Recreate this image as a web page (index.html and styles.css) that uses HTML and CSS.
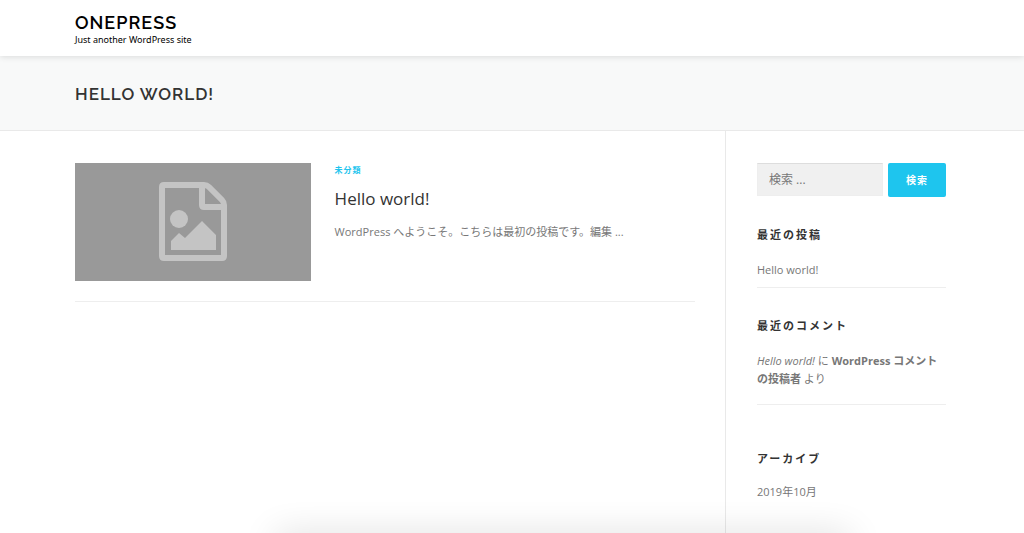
FILE: index.html
```html
<!DOCTYPE html>
<html lang="ja">
<head>
  <meta charset="UTF-8">
  <meta name="viewport" content="width=device-width, initial-scale=1">
  <title>Hello world! - OnePress</title>
  <link rel="stylesheet" href="styles.css">
</head>
<body>
  <header class="site-header">
    <div class="container">
      <p class="site-title"><a href="#">OnePress</a></p>
      <p class="site-description">Just another WordPress site</p>
    </div>
  </header>

  <div class="page-header">
    <div class="container">
      <h1 class="page-title">Hello world!</h1>
    </div>
  </div>

  <div class="container site-content">
    <main class="content-area">
      <article class="post">
        <a class="post-thumb" href="#" aria-label="Hello world!">
          <svg class="thumb-icon" viewBox="0 0 68 79" aria-hidden="true">
            <path fill="none" stroke="#c4c4c4" stroke-width="6" stroke-linejoin="round" d="M3 5q0-2 2-2h40q3 0 5 2l13 13q2 2 2 5v51q0 2-2 2H5q-2 0-2-2zM43 3v20q0 2 2 2h20"/>
            <circle cx="20" cy="37" r="9" fill="#c4c4c4"/>
            <path fill="#c4c4c4" d="M12 68v-9l8-8 6 5 17-17 14 14v15z"/>
          </svg>
        </a>
        <div class="post-body">
          <a class="post-cat" href="#">未分類</a>
          <h2 class="post-title"><a href="#">Hello world!</a></h2>
          <p class="post-excerpt">WordPress へようこそ。こちらは最初の投稿です。編集 ...</p>
        </div>
      </article>
    </main>

    <aside class="sidebar">
      <form class="search-form">
        <input type="search" class="search-field" placeholder="検索 ..." aria-label="検索">
        <button type="submit" class="search-submit">検索</button>
      </form>

      <section class="widget">
        <h2 class="widget-title">最近の投稿</h2>
        <ul class="widget-list">
          <li><a href="#">Hello world!</a></li>
        </ul>
      </section>

      <section class="widget widget-comments">
        <h2 class="widget-title">最近のコメント</h2>
        <ul class="widget-list">
          <li><a class="comment-post" href="#">Hello world!</a> に <a class="comment-author" href="#">WordPress コメントの投稿者</a> より</li>
        </ul>
      </section>

      <section class="widget widget-archive">
        <h2 class="widget-title">アーカイブ</h2>
        <ul class="widget-list">
          <li><a href="#">2019年10月</a></li>
        </ul>
      </section>
    </aside>
  </div>
</body>
</html>
```

FILE: styles.css
```css
* {
  box-sizing: border-box;
  margin: 0;
  padding: 0;
}

body {
  display: flex;
  flex-direction: column;
  min-height: 100vh;
  background: #fff;
  color: #777;
  font-family: "Open Sans", "Noto Sans CJK JP", sans-serif;
  font-size: 11px;
  line-height: 18px;
}

/* Shadow rising from the bottom edge of the window */
body::after {
  content: "";
  position: fixed;
  left: 27%;
  right: 17%;
  bottom: -20px;
  height: 16px;
  box-shadow: 0 0 36px rgba(0, 0, 0, 0.2);
  pointer-events: none;
}

a {
  color: inherit;
  text-decoration: none;
}

.container {
  width: 100%;
  padding: 0 78px 0 75px;
}

/* Header */
.site-header {
  position: relative;
  padding: 13px 0 9px;
  background: #fff;
  color: #000;
  box-shadow: 0 1px 6px rgba(0, 0, 0, 0.12);
}

.site-title,
.page-title {
  font-family: Raleway, Lato, sans-serif;
  font-size: 18px;
  font-weight: 600;
  line-height: 20px;
  letter-spacing: 1px;
  text-transform: uppercase;
}

.site-description {
  font-family: "Noto Sans", sans-serif;
  font-size: 9px;
  line-height: 14px;
}

.page-header {
  padding: 28px 0 26px;
  background: #f8f9f9;
  border-bottom: 1px solid #e9e9e9;
}

.page-title {
  color: #333;
  font-size: 17px;
}

/* Content */
.site-content {
  display: flex;
  flex: 1;
}

.content-area {
  flex: 1;
  padding: 32px 30px 0 0;
  border-right: 1px solid #e9e9e9;
}

.post {
  display: flex;
  gap: 24px;
  padding-bottom: 20px;
  border-bottom: 1px solid #eee;
}

.post-thumb {
  display: flex;
  flex: 0 0 38%;
  align-items: center;
  justify-content: center;
  aspect-ratio: 2 / 1;
  background: #999;
}

.thumb-icon {
  width: 68px;
}

.post-cat {
  display: block;
  color: #1ec5ee;
  font-size: 8px;
  font-weight: 700;
  line-height: 14px;
  letter-spacing: 1px;
}

.post-title {
  margin: 10px 0 12px;
  color: #333;
  font-size: 17px;
  font-weight: 400;
  line-height: 24px;
}

/* Sidebar */
.sidebar {
  flex: 0 0 220px;
  min-width: 0;
  padding: 32px 0 0 31px;
}

.search-form {
  display: flex;
  gap: 5px;
  margin-bottom: 29px;
}

.search-field {
  flex: 1;
  min-width: 0;
  height: 33px;
  padding: 0 11px;
  border: 1px solid #eee;
  border-top-color: #ddd;
  background: #f0f0f0;
  color: #777;
  font: inherit;
  font-size: 12px;
}

.search-field::placeholder {
  color: #777;
}

.search-submit {
  width: 58px;
  height: 34px;
  border: 0;
  border-radius: 2px;
  background: #1ec5ee;
  color: #fff;
  font: inherit;
  font-size: 10px;
  font-weight: 700;
  letter-spacing: 1px;
  cursor: pointer;
}

.widget {
  margin-bottom: 29px;
}

.widget-title {
  margin-bottom: 17px;
  color: #333;
  font-size: 11px;
  font-weight: 700;
  line-height: 18px;
  letter-spacing: 2px;
}

.widget-list {
  list-style: none;
}

.widget-list li {
  padding-bottom: 8px;
  border-bottom: 1px solid #eee;
}

.widget-comments {
  margin-bottom: 45px;
}

.widget-comments li {
  padding-bottom: 16px;
}

.comment-post {
  font-style: italic;
}

.comment-author {
  font-weight: 700;
}

.widget-archive .widget-title {
  margin-bottom: 15px;
}

.widget-archive li {
  border-bottom: 0;
}
```
